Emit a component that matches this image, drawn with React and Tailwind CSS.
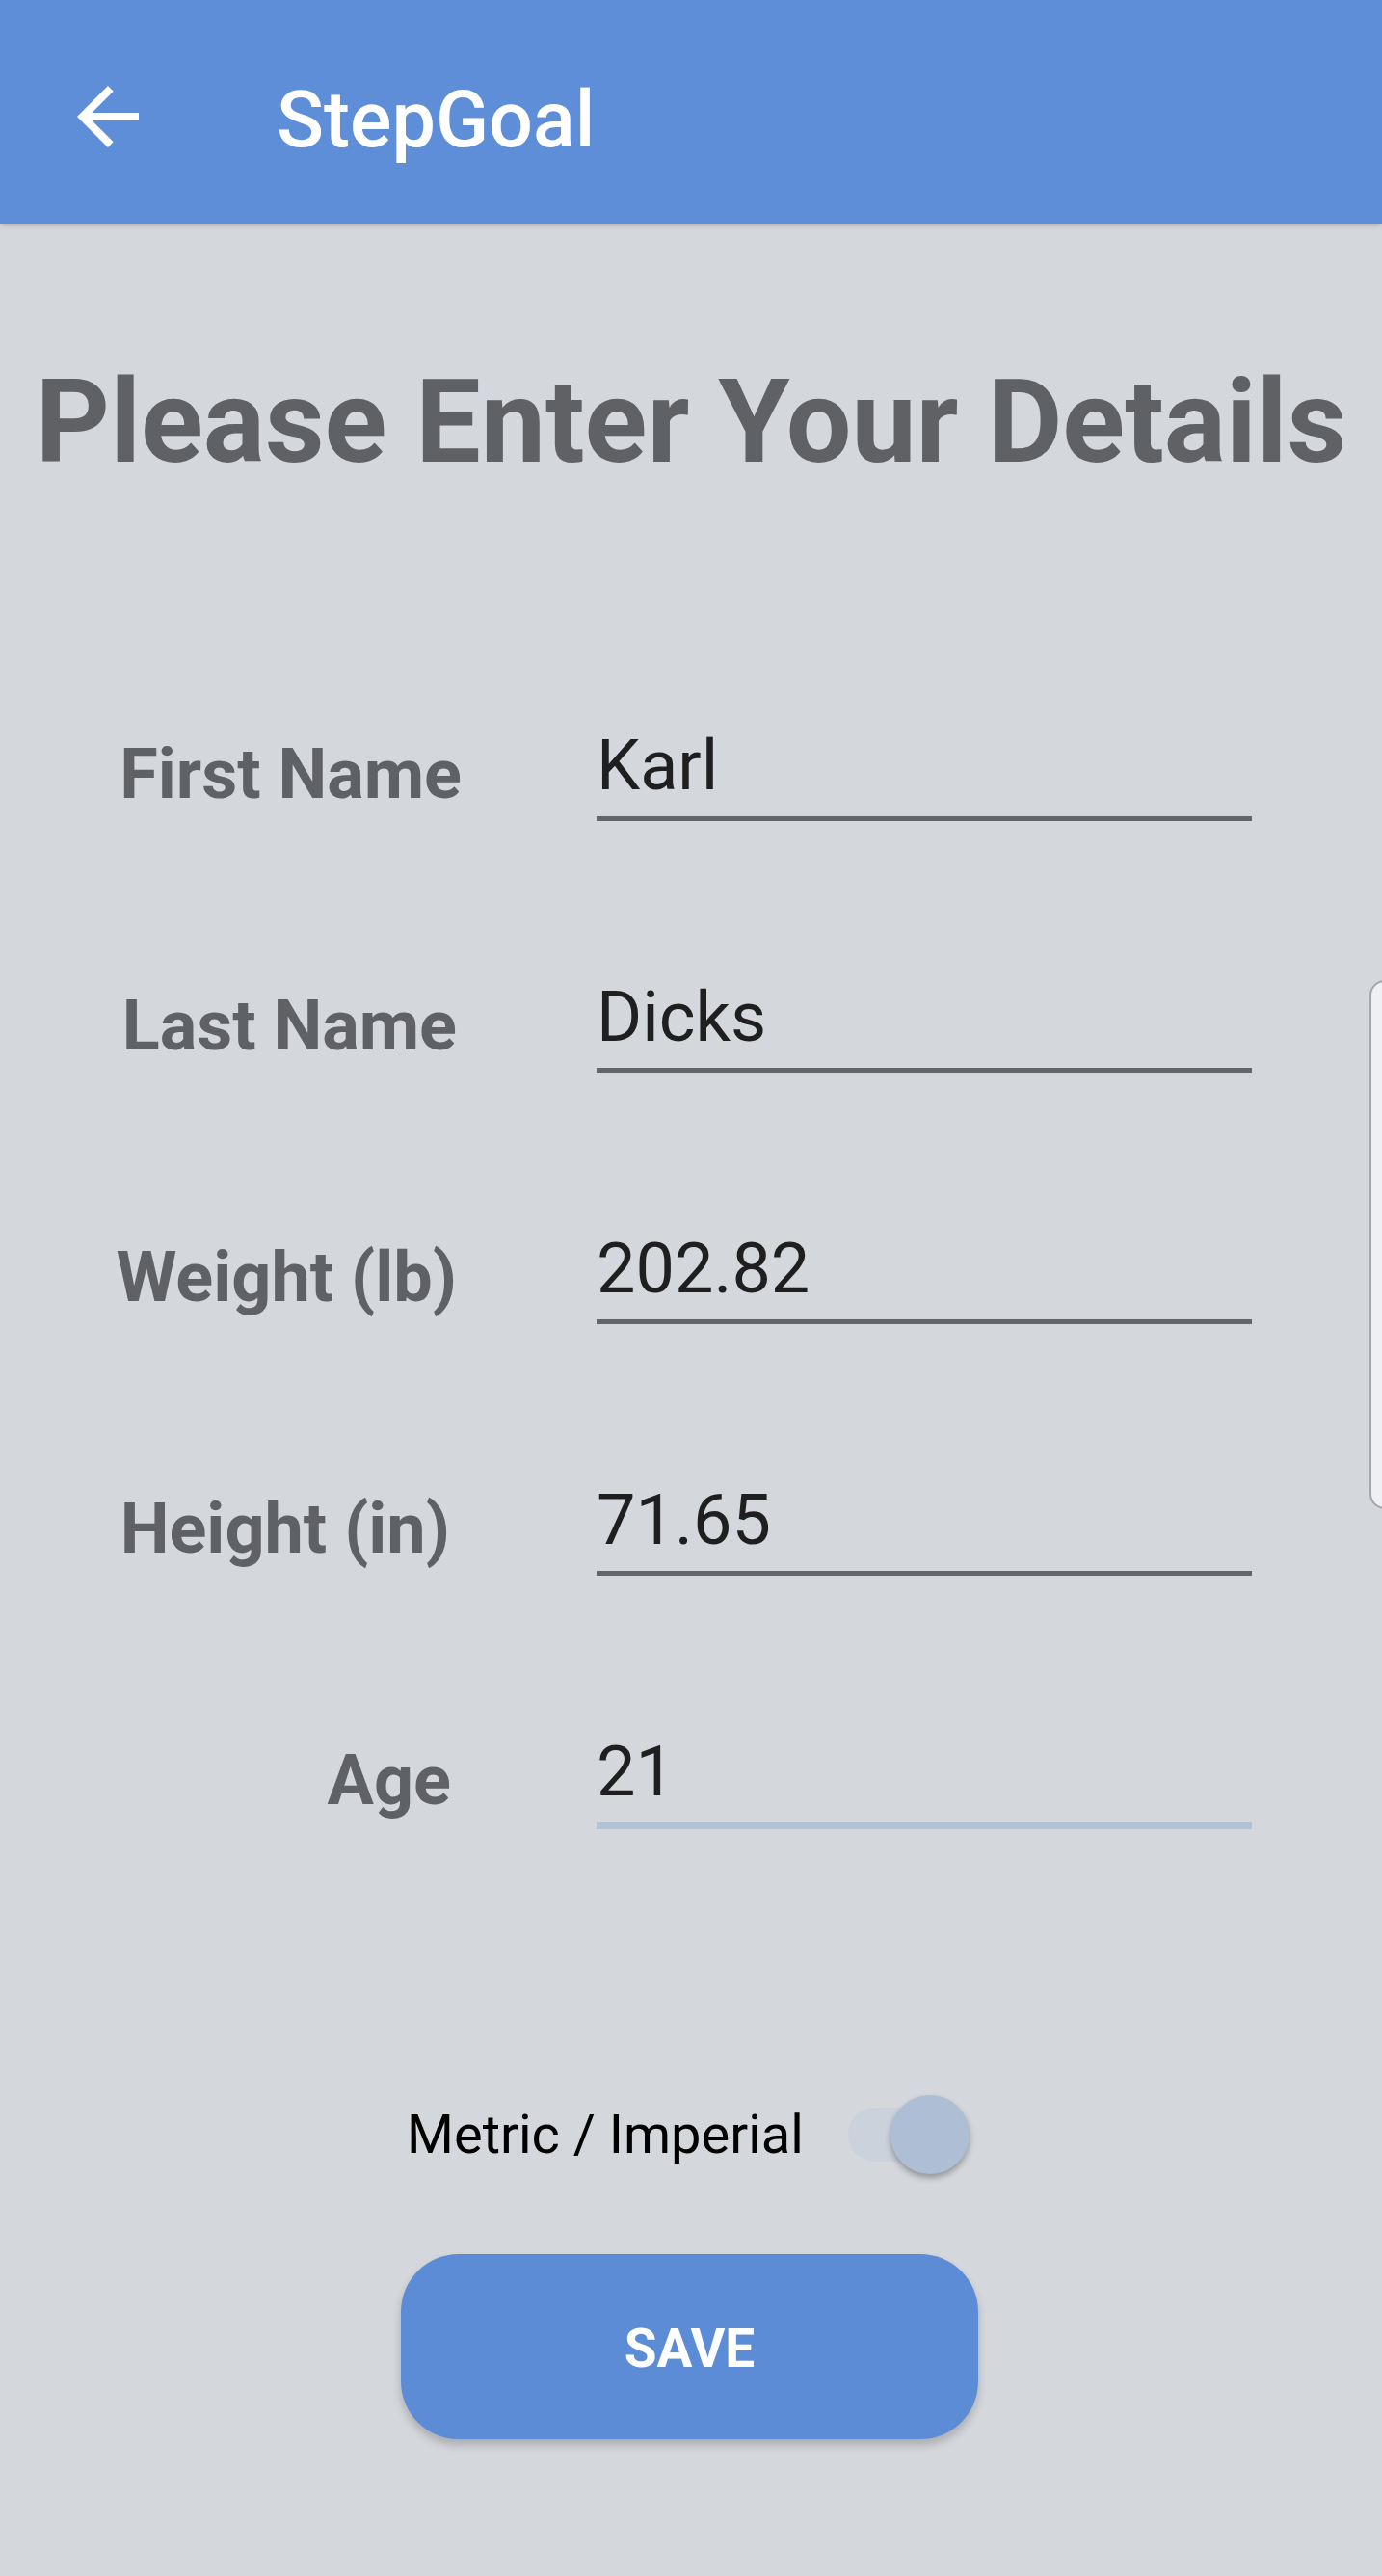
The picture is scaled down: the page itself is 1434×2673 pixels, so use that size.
import { useState } from "react";

const fields = [
  { label: "First Name", value: "Karl", nudge: "mr-[-5px]" },
  { label: "Last Name", value: "Dicks", nudge: "mr-0" },
  { label: "Weight (lb)", value: "202.82", nudge: "mr-0" },
  { label: "Height (in)", value: "71.65", nudge: "mr-[7px]" },
  { label: "Age", value: "21", nudge: "mr-[6px]", focused: true },
];

function Field({ label, value, nudge, focused }) {
  return (
    <div className="flex items-start">
      <div className="w-[474px] flex justify-end mt-[9px]">
        <span className={"text-[72px] leading-none font-bold text-[#606165] " + nudge}>{label}</span>
      </div>
      <div
        className={
          "ml-[145px] w-[680px] text-[72px] leading-none text-[#1f1f1f] pb-[16px] " +
          (focused ? "border-b-[7px] border-[#b0c2d6]" : "border-b-[5px] border-[#646569]")
        }
      >
        {value}
      </div>
    </div>
  );
}

export default function App() {
  const [metric, setMetric] = useState(false);

  return (
    <div
      className="relative w-full min-h-[2673px] bg-[#d4d7dc] overflow-hidden"
      style={{ fontFamily: "Roboto, 'Noto Sans', sans-serif" }}
    >
      <header className="h-[232px] bg-[#5e8ed7] shadow-md flex items-center pl-[64px] pt-[17px]">
        <svg className="w-[96px] h-[96px] -mt-[7px]" viewBox="0 0 24 24" fill="#ffffff">
          <path d="M20 11H7.83l5.59-5.59L12 4l-8 8 8 8 1.41-1.41L7.83 13H20v-2z" />
        </svg>
        <span className="ml-[127px] text-[81px] leading-none font-medium text-white">StepGoal</span>
      </header>

      <h1 className="mt-[146px] text-center text-[120px] leading-none font-bold text-[#606165]">
        Please Enter Your Details
      </h1>

      <div className="mt-[261px] flex flex-col gap-[168px]">
        {fields.map((f) => (
          <Field key={f.label} {...f} />
        ))}
      </div>

      <div className="mt-[276px] flex items-center justify-center">
        <span className="ml-[-6px] text-[56px] leading-none text-black">Metric / Imperial</span>
        <button
          onClick={() => setMetric(!metric)}
          className="relative ml-[46px] w-[126px] h-[82px] flex items-center"
        >
          <span className="absolute left-0 right-0 h-[56px] rounded-full bg-[#cbd2dc]" />
          <span className="absolute right-0 w-[82px] h-[82px] rounded-full bg-[#aebed5] shadow-[0_4px_6px_rgba(0,0,0,0.3)]" />
        </button>
      </div>

      <div className="mt-[83px] flex justify-center">
        <button className="ml-[-3px] w-[599px] h-[192px] pt-[4px] rounded-[60px] bg-[#5d8cd6] shadow-[0_6px_10px_rgba(0,0,0,0.2)] text-white text-[55px] font-bold leading-none">
          SAVE
        </button>
      </div>

      <div className="absolute left-[1421px] top-[1017px] w-[40px] h-[549px] rounded-l-[16px] border-2 border-[#a3a5a9] bg-[#eef0f3]" />
    </div>
  );
}
